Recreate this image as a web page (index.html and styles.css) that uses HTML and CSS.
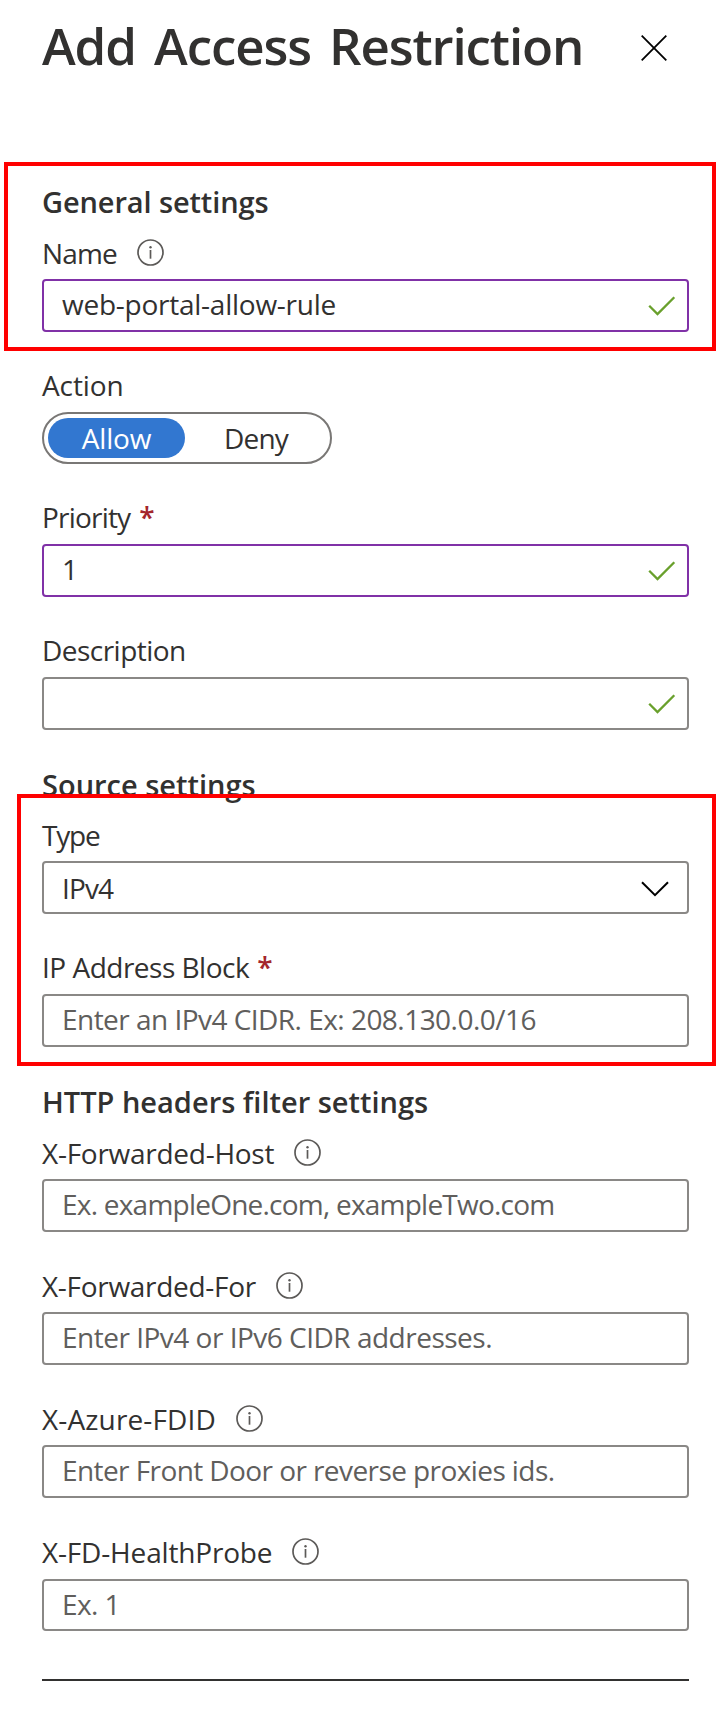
FILE: index.html
```
<!DOCTYPE html>
<html lang="en">
<head>
<meta charset="utf-8">
<title>Add Access Restriction</title>
<link rel="stylesheet" href="styles.css">
</head>
<body>
<svg class="defs" width="0" height="0" aria-hidden="true">
  <symbol id="info" viewBox="0 0 27 27">
    <circle cx="13.5" cy="13.5" r="12.5" fill="none" stroke="#5c5a58" stroke-width="1.7"/>
    <path d="M13.5 11V19.7" stroke="#5c5a58" stroke-width="1.7"/>
    <circle cx="13.5" cy="8.3" r="1.2" fill="#5c5a58"/>
  </symbol>
  <symbol id="check" viewBox="0 0 28 20">
    <path d="M1.2 9.8L9.5 18.1L26.3 1.3" fill="none" stroke="#69a02c" stroke-width="2.3"/>
  </symbol>
</svg>
<main class="panel">
  <header class="header">
    <h1 class="title">Add Access Restriction</h1>
    <svg class="close" viewBox="0 0 26 26"><path d="M.7 .7L25.3 25.3M25.3 .7L.7 25.3" stroke="#000" stroke-width="1.8"/></svg>
  </header>

  <section class="section">
    <h2 class="heading heading-general">General settings</h2>
    <div class="field">
      <div class="label"><span class="t-name">Name</span><svg class="info"><use href="#info"/></svg></div>
      <div class="input valid"><span class="t-rule">web-portal-allow-rule</span><svg class="check"><use href="#check"/></svg></div>
    </div>
    <div class="field roomy">
      <div class="label"><span class="t-action">Action</span></div>
      <div class="toggle"><span class="option selected">Allow</span><span class="option deny">Deny</span></div>
    </div>
    <div class="field roomy">
      <div class="label"><span class="t-priority">Priority</span><span class="required star-priority">*</span></div>
      <div class="input valid"><span>1</span><svg class="check"><use href="#check"/></svg></div>
    </div>
    <div class="field roomy">
      <div class="label"><span class="t-description">Description</span></div>
      <div class="input"><svg class="check"><use href="#check"/></svg></div>
    </div>
  </section>

  <section class="section section-source">
    <h2 class="heading heading-source">Source settings</h2>
    <div class="field">
      <div class="label"><span class="t-type">Type</span></div>
      <div class="input select"><span class="t-ipv4">IPv4</span><svg class="chevron" viewBox="0 0 28 16"><path d="M1 1.2L14 14.2L27 1.2" fill="none" stroke="#000" stroke-width="2"/></svg></div>
    </div>
    <div class="field roomy">
      <div class="label"><span class="t-block">IP Address Block</span><span class="required star-block">*</span></div>
      <div class="input placeholder"><span class="t-cidr">Enter an IPv4 CIDR. Ex: 208.130.0.0/16</span></div>
    </div>
  </section>

  <section class="section section-http">
    <h2 class="heading">HTTP headers filter settings</h2>
    <div class="field">
      <div class="label"><span class="t-host">X-Forwarded-Host</span><svg class="info"><use href="#info"/></svg></div>
      <div class="input placeholder"><span class="t-example">Ex. exampleOne.com, exampleTwo.com</span></div>
    </div>
    <div class="field">
      <div class="label"><span class="t-for">X-Forwarded-For</span><svg class="info"><use href="#info"/></svg></div>
      <div class="input placeholder"><span class="t-addresses">Enter IPv4 or IPv6 CIDR addresses.</span></div>
    </div>
    <div class="field">
      <div class="label"><span class="t-fdid">X-Azure-FDID</span><svg class="info"><use href="#info"/></svg></div>
      <div class="input placeholder"><span class="t-frontdoor">Enter Front Door or reverse proxies ids.</span></div>
    </div>
    <div class="field roomy last">
      <div class="label"><span class="t-probe">X-FD-HealthProbe</span><svg class="info"><use href="#info"/></svg></div>
      <div class="input placeholder"><span class="t-one">Ex. 1</span></div>
    </div>
  </section>
  <hr class="rule">
  <div class="callout callout-general"></div>
  <div class="callout callout-source"></div>
</main>
</body>
</html>
```
FILE: styles.css
```
* { box-sizing: border-box; }
body {
  margin: 0;
  background: #fff;
  color: #323130;
  font: 28px/40px "Open Sans", "Noto Sans", sans-serif;
  white-space: nowrap;
}
.defs { position: absolute; }
.panel {
  position: relative;
  width: 722px;
  height: 1717px;
  padding: 15px 33px 0 42px;
  overflow: hidden;
}
.header { display: flex; height: 167px; }
.title {
  margin: 0;
  width: 599px;
  font-size: 51px;
  line-height: 60px;
  font-weight: 600;
  letter-spacing: -1.1px;
  word-spacing: 6px;
}
.close { width: 26px; height: 26px; margin-top: 20px; }

.section { display: flex; flex-direction: column; }
.section-source { margin-top: 35px; }
.section-http { margin-top: 35px; }
.heading {
  margin: 0 0 11px;
  font-size: 29px;
  line-height: 40px;
  font-weight: 600;
}
.heading-general { letter-spacing: -0.12px; }
.heading-source { margin-bottom: 10px; }

.field { display: flex; flex-direction: column; gap: 6px; }
.field.roomy { gap: 7px; }
.field + .field { margin-top: 33px; }
.section-http .field + .field { margin-top: 34px; }
.label { display: flex; height: 40px; }
.info { width: 27px; height: 27px; margin: 6px 0 0 20px; }
.required { color: #a4262c; font-weight: 600; }

.input {
  display: flex;
  align-items: center;
  width: 647px;
  height: 53px;
  padding: 0 11px 3px 18px;
  border: 2px solid #8a8886;
  border-radius: 4px;
}
.input.valid { border-color: #8031a7; }
.input.placeholder { color: #605e5c; }
.input.select { padding: 1px 18px 0 18px; }
.last .input { height: 52px; padding-bottom: 2px; }
.check { width: 28px; height: 20px; margin: 3px 0 0 auto; }
.chevron { width: 28px; height: 16px; margin: 1px 0 0 auto; }

.toggle {
  display: flex;
  width: 290px;
  height: 52px;
  padding: 4px;
  border: 2px solid #797775;
  border-radius: 26px;
}
.option { height: 40px; text-align: center; }
.option.selected {
  width: 137px;
  border-radius: 20px;
  background: #3277d0;
  color: #fff;
  letter-spacing: -0.17px;
}
.option.deny { padding-left: 39px; letter-spacing: -0.8px; }

.t-name { letter-spacing: -0.85px; }
.t-rule { letter-spacing: -0.25px; }
.t-action { letter-spacing: -0.1px; }
.t-priority { letter-spacing: -0.8px; }
.t-description { letter-spacing: -0.53px; }
.t-type { letter-spacing: -1.2px; }
.t-ipv4 { letter-spacing: -0.88px; }
.t-block { letter-spacing: -0.5px; }
.t-cidr { letter-spacing: -0.53px; }
.t-host { letter-spacing: -0.27px; }
.t-example { letter-spacing: -0.77px; }
.t-for { letter-spacing: -0.3px; }
.t-addresses { letter-spacing: -0.5px; }
.t-fdid { letter-spacing: 0.14px; }
.t-frontdoor { letter-spacing: -0.58px; }
.t-probe { letter-spacing: -0.17px; }
.t-one { letter-spacing: -0.6px; }
.star-priority { margin-left: 9px; }
.star-block { margin-left: 8px; }

.rule {
  width: 647px;
  height: 2px;
  margin: 48px 0 0;
  border: 0;
  background: #323130;
}

.callout { position: absolute; border: 4px solid #f00; }
.callout-general { left: 4px; top: 162px; width: 712px; height: 189px; }
.callout-source { left: 17px; top: 794px; width: 699px; height: 272px; }
```
